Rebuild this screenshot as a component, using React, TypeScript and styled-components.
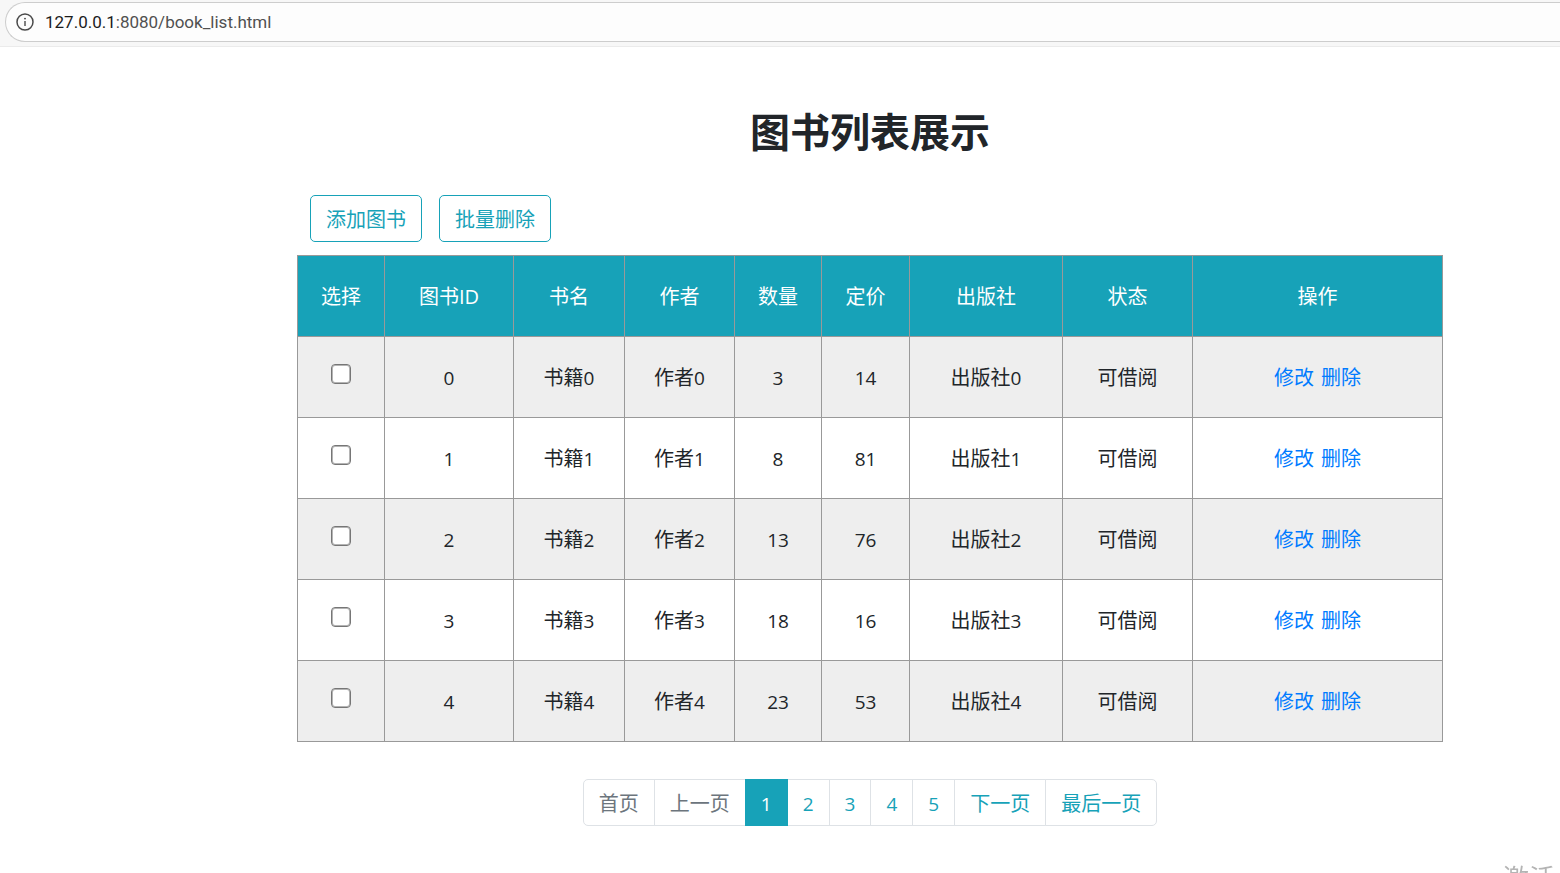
import React, { useState } from "react";
import styled, { createGlobalStyle } from "styled-components";

const TEAL = "#17a2b8";

const GlobalStyle = createGlobalStyle`
  *, *::before, *::after { box-sizing: border-box; }
  body {
    margin: 0;
    background: #fff;
    color: #212529;
    font-family: "Open Sans", "Noto Sans CJK SC", sans-serif;
    font-size: 20px;
    line-height: 30px;
    overflow-x: hidden;
  }
`;

const Page = styled.div`
  min-height: 100vh;
`;

const BrowserBar = styled.header`
  height: 47px;
  padding: 2px 0 5px 5px;
  background: #f7f7f7;
  border-bottom: 1px solid #ebebeb;
`;

const AddressField = styled.div`
  display: flex;
  align-items: center;
  gap: 11px;
  height: 40px;
  padding-left: 10px;
  border: 1px solid #cdcdcd;
  border-right: 0;
  border-radius: 20px 0 0 20px;
  background: #fdfdfd;
`;

const Address = styled.span`
  font-family: Roboto, sans-serif;
  font-size: 17px;
  line-height: 24px;
  color: #505050;
`;

const Host = styled.span`
  color: #1b1b1b;
`;

const Main = styled.main`
  max-width: 1560px;
  padding: 59px 117px 47px 297px;
`;

const Title = styled.h2`
  margin: 0;
  text-align: center;
  font-size: 40px;
  line-height: 52px;
  font-weight: 700;
`;

const Toolbar = styled.div`
  display: flex;
  gap: 17px;
  margin: 37px 0 13px;
  padding-left: 13px;
`;

const OutlineButton = styled.button`
  height: 47px;
  padding: 2px 15px 0;
  border: 1px solid ${TEAL};
  border-radius: 5px;
  background: transparent;
  color: ${TEAL};
  font: inherit;
  cursor: pointer;
`;

const Table = styled.table`
  width: 100%;
  table-layout: fixed;
  border-collapse: collapse;
  text-align: center;
`;

const HeadCell = styled.th<{ $width: number }>`
  width: ${(p) => p.$width}px;
  height: 81px;
  padding: 2px 0 0;
  border: 1px solid #999;
  background: ${TEAL};
  color: #fff;
  font-size: 20px;
  font-weight: 400;
`;

const Row = styled.tr`
  &:nth-child(odd) { background: #eee; }
`;

const Cell = styled.td`
  height: 81px;
  padding: 2px 0 0;
  border: 1px solid #999;
`;

const CheckCell = styled(Cell)`
  padding: 0 0 7px;
  line-height: 0;
`;

const Check = styled.input`
  appearance: none;
  width: 20px;
  height: 20px;
  margin: 0;
  border: 1px solid #767676;
  border-radius: 4px;
  background: #fff;
  box-shadow: inset 0 0 0 1px #b4b4b4;
  &:checked { background: #0075ff; border-color: #0075ff; }
`;

const Num = styled.span`
  font-size: 19px;
`;

const Actions = styled.div`
  display: flex;
  justify-content: center;
  gap: 7px;
`;

const ActionLink = styled.a`
  color: #007bff;
  text-decoration: none;
`;

const Pagination = styled.ul`
  display: flex;
  justify-content: center;
  margin: 37px 0 0;
  padding: 0;
  list-style: none;
`;

const PageItem = styled.li`
  & + & { margin-left: -1px; }
  &:first-child > * { border-radius: 5px 0 0 5px; }
  &:last-child > * { border-radius: 0 5px 5px 0; }
`;

const PageLink = styled.a<{ $state?: "active" | "disabled" }>`
  position: relative;
  z-index: ${(p) => (p.$state === "active" ? 1 : 0)};
  display: flex;
  align-items: center;
  height: 47px;
  padding: 2px 15px 0;
  border: 1px solid ${(p) => (p.$state === "active" ? TEAL : "#dee2e6")};
  background: ${(p) => (p.$state === "active" ? TEAL : "#fff")};
  color: ${(p) => (p.$state === "active" ? "#fff" : p.$state === "disabled" ? "#6c757d" : TEAL)};
  text-decoration: none;
`;

const Watermark = styled.div`
  position: fixed;
  right: 5px;
  bottom: -20px;
  color: #b4b4b4;
  font-size: 26px;
  line-height: 30px;
  pointer-events: none;
`;

const columns = [
  { label: "选择", width: 87 },
  { label: "图书ID", width: 129 },
  { label: "书名", width: 111 },
  { label: "作者", width: 110 },
  { label: "数量", width: 87 },
  { label: "定价", width: 88 },
  { label: "出版社", width: 153 },
  { label: "状态", width: 130 },
  { label: "操作", width: 250 },
];

const books = [
  { id: 0, count: 3, price: 14 },
  { id: 1, count: 8, price: 81 },
  { id: 2, count: 13, price: 76 },
  { id: 3, count: 18, price: 16 },
  { id: 4, count: 23, price: 53 },
];

const pages: { label: string; state?: "active" | "disabled"; numeric?: boolean }[] = [
  { label: "首页", state: "disabled" },
  { label: "上一页", state: "disabled" },
  { label: "1", state: "active", numeric: true },
  { label: "2", numeric: true },
  { label: "3", numeric: true },
  { label: "4", numeric: true },
  { label: "5", numeric: true },
  { label: "下一页" },
  { label: "最后一页" },
];

function InfoIcon() {
  return (
    <svg width="18" height="18" viewBox="0 0 18 18" fill="none" aria-hidden="true">
      <circle cx="9" cy="9" r="8" stroke="#4a4a4a" strokeWidth="1.5" />
      <path d="M9 8v5" stroke="#4a4a4a" strokeWidth="1.4" />
      <circle cx="9" cy="5.6" r="0.95" fill="#4a4a4a" />
    </svg>
  );
}

export default function App() {
  const [selected, setSelected] = useState<number[]>([]);
  const toggle = (id: number) =>
    setSelected((s) => (s.includes(id) ? s.filter((x) => x !== id) : [...s, id]));

  return (
    <Page>
      <GlobalStyle />
      <BrowserBar>
        <AddressField>
          <InfoIcon />
          <Address>
            <Host>127.0.0.1</Host>:8080/book_list.html
          </Address>
        </AddressField>
      </BrowserBar>
      <Main>
        <Title>图书列表展示</Title>
        <Toolbar>
          <OutlineButton type="button">添加图书</OutlineButton>
          <OutlineButton type="button">批量删除</OutlineButton>
        </Toolbar>
        <Table>
          <thead>
            <tr>
              {columns.map((c) => (
                <HeadCell key={c.label} scope="col" $width={c.width}>
                  {c.label}
                </HeadCell>
              ))}
            </tr>
          </thead>
          <tbody>
            {books.map((b) => (
              <Row key={b.id}>
                <CheckCell>
                  <Check
                    type="checkbox"
                    aria-label={`选择 书籍${b.id}`}
                    checked={selected.includes(b.id)}
                    onChange={() => toggle(b.id)}
                  />
                </CheckCell>
                <Cell><Num>{b.id}</Num></Cell>
                <Cell>书籍<Num>{b.id}</Num></Cell>
                <Cell>作者<Num>{b.id}</Num></Cell>
                <Cell><Num>{b.count}</Num></Cell>
                <Cell><Num>{b.price}</Num></Cell>
                <Cell>出版社<Num>{b.id}</Num></Cell>
                <Cell>可借阅</Cell>
                <Cell>
                  <Actions>
                    <ActionLink href="#edit">修改</ActionLink>
                    <ActionLink href="#delete">删除</ActionLink>
                  </Actions>
                </Cell>
              </Row>
            ))}
          </tbody>
        </Table>
        <nav aria-label="分页">
          <Pagination>
            {pages.map((p) => (
              <PageItem key={p.label}>
                <PageLink
                  href="#page"
                  $state={p.state}
                  aria-current={p.state === "active" ? "page" : undefined}
                  aria-disabled={p.state === "disabled" || undefined}
                >
                  {p.numeric ? <Num>{p.label}</Num> : p.label}
                </PageLink>
              </PageItem>
            ))}
          </Pagination>
        </nav>
      </Main>
      <Watermark>激活</Watermark>
    </Page>
  );
}
